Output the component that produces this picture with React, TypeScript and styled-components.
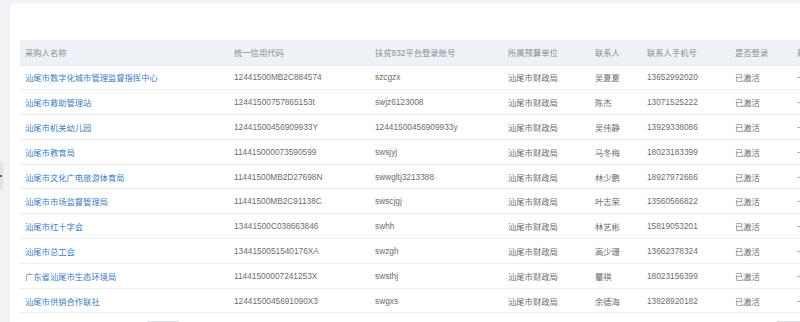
import styled, { createGlobalStyle } from "styled-components"

const GlobalStyle = createGlobalStyle`
  html, body {
    margin: 0;
    padding: 0;
    background: #f0f2f5;
    overflow: hidden;
  }
  body {
    font-family: "Liberation Sans", "Noto Sans CJK SC", sans-serif;
    font-size: 8.3px;
  }
`

const columns = [
	{ title: "采购人名称", width: 209 },
	{ title: "统一信用代码", width: 141 },
	{ title: "扶贫832平台登录账号", width: 133 },
	{ title: "所属预算单位", width: 87 },
	{ title: "联系人", width: 52 },
	{ title: "联系人手机号", width: 88 },
	{ title: "是否登录", width: 62 },
	{ title: "最后登录时间", width: 100 },
]

const rows = [
	["汕尾市数字化城市管理监督指挥中心", "12441500MB2C884574", "szcgzx", "吴夏夏", "13652992020"],
	["汕尾市救助管理站", "12441500757865153t", "swjz6123008", "陈杰", "13071525222"],
	["汕尾市机关幼儿园", "12441500456909933Y", "12441500456909933y", "吴伟静", "13929338086"],
	["汕尾市教育局", "114415000073590599", "swsjyj", "马冬梅", "18023183399"],
	["汕尾市文化广电旅游体育局", "11441500MB2D27698N", "swwgltj3213388", "林少鹏", "18927972666"],
	["汕尾市市场监督管理局", "11441500MB2C91138C", "swscjgj", "叶志荣", "13560566822"],
	["汕尾市红十字会", "13441500C038663846", "swhh", "林艺彬", "15819053201"],
	["汕尾市总工会", "1344150051540176XA", "swzgh", "高少珊", "13662378324"],
	["广东省汕尾市生态环境局", "11441500007241253X", "swsthj", "瞿祺", "18023156399"],
	["汕尾市供销合作联社", "12441500456910 90X3".replace(" ", ""), "swgxs", "余德海", "13828920182"],
]

export default function App() {
	return (
		<>
			<GlobalStyle />
			<Page>
				<SideHandle />
				<Card>
					<Table>
						<colgroup>
							{columns.map((c) => (
								<col key={c.title} style={{ width: c.width }} />
							))}
						</colgroup>
						<thead>
							<tr>
								{columns.map((c) => (
									<HeadCell key={c.title}>{c.title}</HeadCell>
								))}
							</tr>
						</thead>
						<tbody>
							{rows.map((r) => (
								<tr key={r[0]}>
									<Cell><NameLink>{r[0]}</NameLink></Cell>
									<Cell>{r[1]}</Cell>
									<Cell>{r[2]}</Cell>
									<Cell>汕尾市财政局</Cell>
									<Cell>{r[3]}</Cell>
									<Cell>{r[4]}</Cell>
									<Cell>已激活</Cell>
									<Cell>-</Cell>
								</tr>
							))}
						</tbody>
					</Table>
					<Footer>
						<SizeBox />
						<PagerBox />
					</Footer>
				</Card>
			</Page>
		</>
	)
}

const Page = styled.div`
  position: relative;
  padding: 3px 0 0 10px;
  height: 322px;
  box-sizing: border-box;
`

const SideHandle = styled.div`
  position: absolute;
  left: 0;
  top: 163px;
  width: 3px;
  height: 27px;
  background: #e2e4e8;
  &::after {
    content: "";
    position: absolute;
    left: 0;
    top: 12px;
    width: 2px;
    height: 2px;
    background: #666;
  }
`

const Card = styled.div`
  width: 900px;
  background: #fff;
  border-radius: 4px 0 0 0;
  padding: 37px 0 0 10px;
  box-sizing: border-box;
`

const Table = styled.table`
  border-collapse: collapse;
  table-layout: fixed;
  width: 872px;
`

const HeadCell = styled.th`
  height: 25px;
  padding: 0 0 0 5px;
  background: #eef1f6;
  border-bottom: 1px solid #e2e6ec;
  color: #8a8d93;
  font-weight: normal;
  text-align: left;
  white-space: nowrap;
  box-sizing: border-box;
`

const Cell = styled.td`
  height: 24.8px;
  padding: 0 0 0 5px;
  border-bottom: 1px solid #ebeef5;
  color: #6b6d70;
  white-space: nowrap;
  overflow: hidden;
  box-sizing: border-box;
`

const NameLink = styled.span`
  color: #3d7cc3;
`

const Footer = styled.div`
  display: flex;
  justify-content: space-between;
  padding: 8px 0 0 126px;
  width: 790px;
  box-sizing: border-box;
`

const SizeBox = styled.div`
  width: 32px;
  height: 16px;
  border: 1px solid #dcdfe6;
  border-radius: 2px;
`

const PagerBox = styled.div`
  width: 32px;
  height: 16px;
  border: 1px solid #dcdfe6;
  border-radius: 2px;
`
